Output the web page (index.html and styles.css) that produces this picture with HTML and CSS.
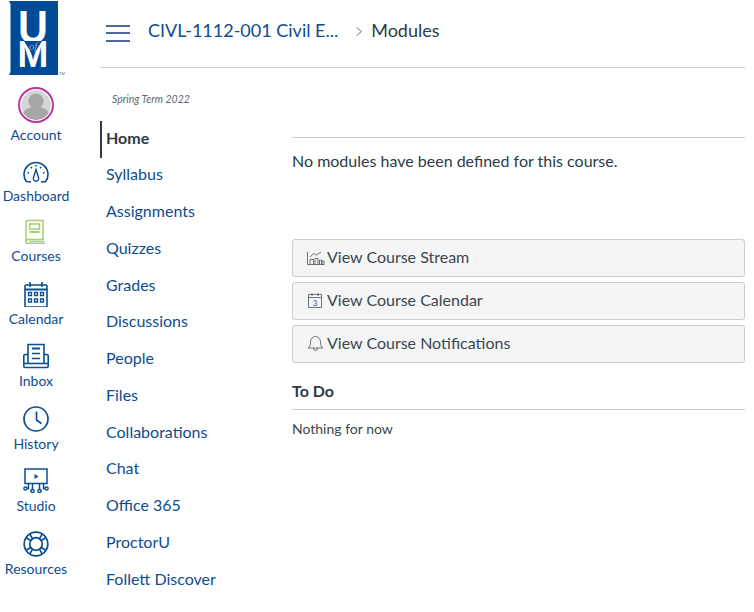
FILE: index.html
```html
<!DOCTYPE html>
<html lang="en">
<head>
    <meta charset="UTF-8">
    <meta name="viewport" content="width=device-width, initial-scale=1.0">
    <title>Modules</title>
    <link rel="stylesheet" href="styles.css">
</head>
<body>
    <div class="page">
        <nav class="global-nav">
            <svg class="logo" width="58" height="78" viewBox="0 0 58 78">
                <path d="M0 1h49v74H0l1.500-3V4z" fill="#004a97"/>
                <text class="logo-u" transform="translate(24 42.500) scale(.9 1)">U</text>
                <text class="logo-m" x="24" y="67">M</text>
                <path d="M15 41h18l-9 15z" fill="#004a97"/>
                <text class="logo-of" x="24" y="50">of</text>
                <text class="logo-tm" x="50" y="75">TM</text>
            </svg>
            <a class="nav-item nav-account">
                <span class="avatar">
                    <svg width="30" height="30" viewBox="0 0 30 30">
                        <circle cx="15" cy="15" r="15" fill="#d6d6d6"/>
                        <circle cx="15" cy="11" r="7.500" fill="#a6a6a6"/>
                        <path d="M1 26c1-7 8-9 14-9s13 2 14 9c-3 3-9 4-14 4s-11-1-14-4z" fill="#a6a6a6"/>
                    </svg>
                </span>
                <span>Account</span>
            </a>
            <a class="nav-item nav-dashboard">
                <svg class="nav-icon" width="26" height="26" viewBox="0 0 26 26" fill="none" stroke="#0a4f93" stroke-width="1.600">
                    <path d="M3.500 23.800A12 12 0 1 1 22.500 23.800h-4.500M3.500 23.800h4.500"/>
                    <path d="M13 11.500l2.600 8.300a2.700 2.700 0 1 1-5.200 0z" stroke-width="1.400"/>
                    <path d="M4.500 14.500l1.500.6M8 9l.9 1.300M13 7v1.500M18 9l-.9 1.300M21.500 14.500l-1.500.6" stroke-width="1.500"/>
                </svg>
                <span>Dashboard</span>
            </a>
            <a class="nav-item">
                <svg class="nav-icon" width="24" height="26" viewBox="1 -1.500 24 26" fill="none" stroke="#a5d06f" stroke-width="1.500">
                    <path d="M3 21V3a2 2 0 0 1 2-2h15v19H5a2 2 0 0 0 0 4h17"/>
                    <path d="M6.500 22h15"/>
                    <rect x="6.500" y="4.500" width="10" height="5"/>
                    <path d="M6.500 12.500h10" stroke-width="2"/>
                </svg>
                <span>Courses</span>
            </a>
            <a class="nav-item">
                <svg class="nav-icon" width="24" height="26" viewBox="0 -1 24 26" fill="none" stroke="#0a4f93" stroke-width="1.600">
                    <rect x="1" y="3" width="22" height="22" rx="1"/>
                    <path d="M1 7.500h22" stroke-width="2"/>
                    <path d="M6 0v5M18 0v5"/>
                    <path d="M4.500 10.500h3v3h-3zM10.500 10.500h3v3h-3zM16.500 10.500h3v3h-3zM4.500 17h3v3h-3zM10.500 17h3v3h-3zM16.500 17h3v3h-3z" stroke-width="1.300"/>
                </svg>
                <span>Calendar</span>
            </a>
            <a class="nav-item">
                <svg class="nav-icon" width="26" height="26" viewBox="0 0 26 26" fill="none" stroke="#0a4f93" stroke-width="1.600">
                    <path d="M5 20V1.500h16V20"/>
                    <path d="M5 11.500H2a1.200 1.200 0 0 0-1.200 1.200V23a1.500 1.500 0 0 0 1.500 1.500h21.400a1.500 1.500 0 0 0 1.500-1.500V12.700a1.200 1.200 0 0 0-1.200-1.200H21"/>
                    <path d="M1 20.500h24"/>
                    <path d="M9 5.500h8" stroke-width="2"/>
                    <path d="M9 10.500h8M9 15.500h8"/>
                </svg>
                <span>Inbox</span>
            </a>
            <a class="nav-item">
                <svg class="nav-icon" width="26" height="26" viewBox="0 0 26 26" fill="none" stroke="#0a4f93" stroke-width="1.700">
                    <circle cx="13" cy="13" r="12"/>
                    <path d="M13.500 5.500V14l5 3.500"/>
                </svg>
                <span>History</span>
            </a>
            <a class="nav-item">
                <svg class="nav-icon" width="26" height="26" viewBox="0 0 26 26" fill="none" stroke="#0a4f93" stroke-width="1.500">
                    <rect x="2" y="1" width="22" height="14.500"/>
                    <path d="M11.500 6l4 2.500-4 2.500z" fill="#0a4f93" stroke="none"/>
                    <path d="M9.500 15.500v6M16.500 15.500v6M5.500 15.500v5H4M20.500 15.500v5H22"/>
                    <circle cx="2.500" cy="20.500" r="1.600"/>
                    <circle cx="9.500" cy="23" r="1.600"/>
                    <circle cx="16.500" cy="23" r="1.600"/>
                    <circle cx="23.500" cy="20.500" r="1.600"/>
                </svg>
                <span>Studio</span>
            </a>
            <a class="nav-item">
                <svg class="nav-icon" width="26" height="26" viewBox="0 0 26 26" fill="none" stroke="#0a4f93" stroke-width="1.700">
                    <circle cx="13" cy="13" r="11.800"/>
                    <circle cx="13" cy="13" r="6.300"/>
                    <path d="M9.500 7.800L6.800 2.900M7.800 9.500L2.900 6.800M16.500 7.800L19.200 2.900M18.200 9.500L23.100 6.800M9.500 18.200L6.800 23.100M7.800 16.500L2.900 19.200M16.500 18.200L19.200 23.100M18.200 16.500L23.100 19.200"/>
                </svg>
                <span>Resources</span>
            </a>
        </nav>
        <div class="main">
            <header class="topbar">
                <button class="menu-btn"><span></span><span></span><span></span></button>
                <a class="crumb">CIVL-1112-001 Civil E...</a>
                <svg class="crumb-sep" width="6" height="9" viewBox="0 0 6 9"><path d="M.5.500L5.500 4.500 .5 8.500" fill="none" stroke="#6b7780"/></svg>
                <span class="crumb-current">Modules</span>
            </header>
            <div class="columns">
                <aside class="course-nav">
                    <div class="term">Spring Term 2022</div>
                    <a class="course-link active">Home</a>
                    <a class="course-link">Syllabus</a>
                    <a class="course-link">Assignments</a>
                    <a class="course-link">Quizzes</a>
                    <a class="course-link">Grades</a>
                    <a class="course-link">Discussions</a>
                    <a class="course-link">People</a>
                    <a class="course-link">Files</a>
                    <a class="course-link">Collaborations</a>
                    <a class="course-link">Chat</a>
                    <a class="course-link">Office 365</a>
                    <a class="course-link">ProctorU</a>
                    <a class="course-link">Follett Discover</a>
                </aside>
                <section class="content">
                    <p class="empty">No modules have been defined for this course.</p>
                    <div class="actions">
                        <a class="action-btn">
                            <svg width="18" height="18" viewBox="0 0 18 18" fill="none" stroke="#5a6670" stroke-width=".9">
                                <path d="M.5 5v12.500H17.500"/>
                                <path d="M3 10l3.500-3.500 3 1.500 4.500-3"/>
                                <path d="M3 17.500V12.500h3.500v5M8 17.500v-6h3v6M12.500 17.500v-4.500h2v4.500M15 17.500v-3.500h2v3.500"/>
                            </svg>
                            View Course Stream
                        </a>
                        <a class="action-btn">
                            <svg width="18" height="18" viewBox="0 0 18 18" fill="none" stroke="#5a6670" stroke-width=".9">
                                <path d="M1.500 4.500h13v13h-13zM1.500 7.500h13M5 3v3M11 3v3"/>
                                <text x="8" y="15.500" class="cal-num">3</text>
                            </svg>
                            View Course Calendar
                        </a>
                        <a class="action-btn">
                            <svg width="18" height="18" viewBox="0 0 18 18" fill="none" stroke="#5a6670" stroke-width=".9">
                                <path d="M1 15c2-1 2.500-3 2.500-6a5 5.500 0 0 1 10 0c0 3 .5 5 2.500 6z"/>
                                <path d="M6.500 15a2 2.500 0 0 0 4 0"/>
                            </svg>
                            View Course Notifications
                        </a>
                    </div>
                    <h2 class="todo-title">To Do</h2>
                    <p class="todo-empty">Nothing for now</p>
                </section>
            </div>
        </div>
    </div>
</body>
</html>
```

FILE: styles.css
```css
html, body {
    margin: 0;
    padding: 0;
    height: 612px;
    overflow: hidden;
}
body {
    background-color: #fff;
    font-family: Lato, "Open Sans", sans-serif;
    color: #2d3b45;
}
a {
    text-decoration: none;
}
.page {
    display: flex;
}

/* left global navigation */
.global-nav {
    width: 72px;
    margin-right: 28px;
    flex: none;
    display: flex;
    flex-direction: column;
    align-items: center;
}
.logo {
    flex: none;
    align-self: flex-start;
    margin-left: 9px;
    margin-bottom: 9px;
    display: block;
}
.logo-u {
    font-family: "Liberation Sans", sans-serif;
    font-weight: bold;
    font-size: 46px;
    fill: #fff;
    text-anchor: middle;
}
.logo-m {
    font-family: "Liberation Sans", sans-serif;
    font-weight: bold;
    font-size: 37px;
    fill: #fff;
    text-anchor: middle;
}
.logo-of {
    font-family: "Liberation Serif", serif;
    font-style: italic;
    font-size: 11px;
    fill: #8fa9cc;
    text-anchor: middle;
}
.logo-tm {
    font-family: "Liberation Sans", sans-serif;
    font-size: 4px;
    fill: #55708f;
}
.nav-item {
    height: 62.6px;
    display: flex;
    flex-direction: column;
    align-items: center;
    justify-content: flex-start;
    font-size: 14px;
    line-height: 17px;
    color: #0f4c8f;
    white-space: nowrap;
}
.nav-item span:last-child {
    margin-top: 3px;
}
.nav-icon {
    display: block;
    height: 26px;
}
.avatar {
    width: 30px;
    height: 30px;
    border: 2px solid #b93a9e;
    border-radius: 50%;
    padding: 1px;
    overflow: hidden;
    display: block;
}
.avatar svg {
    display: block;
    border-radius: 50%;
}
.nav-account {
    height: 71px;
}
.nav-dashboard {
    height: 60px;
}

/* breadcrumb bar */
.main {
    width: 645px;
    flex: none;
}
.topbar {
    height: 59px;
    border-bottom: 1px solid #c7cdd1;
    display: flex;
    align-items: center;
    padding-bottom: 8px;
}
.menu-btn {
    width: 24px;
    height: 17px;
    margin: 7px 0 0 6px;
    padding: 0;
    border: none;
    background: none;
    display: flex;
    flex-direction: column;
    justify-content: space-between;
}
.menu-btn span {
    display: block;
    height: 2px;
    background-color: #4a6a9a;
}
.crumb {
    margin-left: 18px;
    font-size: 18px;
    color: #0f4c8f;
}
.crumb-sep {
    margin: 3px 9px 0 18px;
}
.crumb-current {
    font-size: 18px;
    color: #2d3b45;
}

/* course navigation and content */
.columns {
    display: flex;
}
.course-nav {
    width: 192px;
    flex: none;
}
.term {
    font-size: 10.500px;
    font-style: italic;
    color: #5b6770;
    padding: 25px 0 0 12px;
    height: 28px;
}
.course-link {
    display: block;
    font-size: 16px;
    line-height: 19px;
    padding: 6.500px 0 11.250px 6px;
    color: #0f4c8f;
    white-space: nowrap;
}
.course-link.active {
    font-weight: bold;
    color: #2d3b45;
    border-left: 2px solid #2d3b45;
    padding-left: 4px;
}
.content {
    flex: 1;
    padding-top: 69px;
}
.empty {
    margin: 0;
    border-top: 1px solid #c7cdd1;
    padding-top: 13px;
    font-size: 16px;
    line-height: 19px;
    height: 88px;
}
.actions {
    display: flex;
    flex-direction: column;
    gap: 5px;
}
.action-btn {
    height: 32px;
    padding-bottom: 4px;
    background-color: #f5f5f5;
    border: 1px solid #c7cdd1;
    border-radius: 3px;
    display: flex;
    align-items: center;
    gap: 2px;
    padding-left: 14px;
    font-size: 16px;
    color: #3a4751;
}
.cal-num {
    font-family: Lato, sans-serif;
    font-size: 8px;
    fill: #4a5660;
    stroke: none;
    text-anchor: middle;
}
.todo-title {
    margin: 18px 0 0;
    padding-bottom: 9px;
    border-bottom: 1px solid #c7cdd1;
    font-size: 16px;
    line-height: 19px;
    font-weight: bold;
}
.todo-empty {
    margin: 10px 0 0;
    font-size: 14px;
    line-height: 17px;
    color: #3a4751;
}
```
